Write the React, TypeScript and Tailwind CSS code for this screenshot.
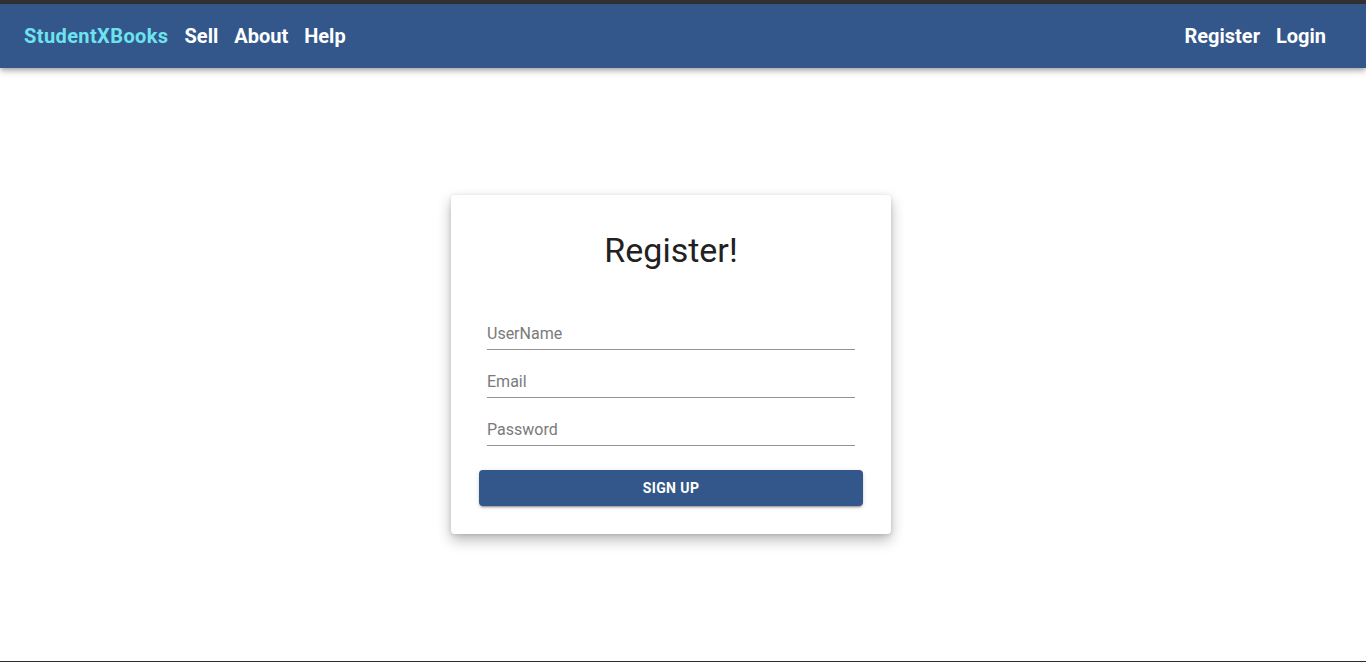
import { FC } from "react";

const fields = ["UserName", "Email", "Password"];

const App: FC = () => {
  return (
    <div
      className="min-h-screen flex flex-col bg-white"
      style={{ fontFamily: "Roboto, 'Liberation Sans', sans-serif" }}
    >
      <div className="h-[4px] bg-[#333333]" />
      <header className="h-[64px] bg-[#33578a] flex items-center justify-between pl-[24px] pr-[40px] shadow-[0_2px_4px_-1px_rgba(0,0,0,0.2),0_4px_5px_0_rgba(0,0,0,0.14),0_1px_10px_0_rgba(0,0,0,0.12)] relative z-10">
        <nav className="flex items-center gap-[16px] text-[20px] font-bold text-white">
          <span className="text-[#6ee3f0] tracking-[0.4px]">StudentXBooks</span>
          <span>Sell</span>
          <span>About</span>
          <span>Help</span>
        </nav>
        <nav className="flex items-center gap-[16px] text-[20px] font-bold text-white">
          <span>Register</span>
          <span>Login</span>
        </nav>
      </header>

      <main className="flex-1 flex justify-center pr-[24px] pt-[127px]">
        <div className="w-[440px] h-fit bg-white rounded-[4px] pt-[34px] pb-[28px] shadow-[0_6px_14px_rgba(0,0,0,0.28),0_1px_4px_rgba(0,0,0,0.12)]">
          <h1 className="text-[34px] leading-[42px] text-[#212121] text-center font-normal mb-[31px]">
            Register!
          </h1>
          <div className="px-[36px] flex flex-col">
            {fields.map((f) => (
              <div key={f} className="border-b border-[#949494] pt-[20px] pb-[3px]">
                <p className="text-[16px] leading-[24px] text-[#7a7a7a]">{f}</p>
              </div>
            ))}
          </div>
          <div className="px-[28px] mt-[24px]">
            <button className="w-full h-[36px] rounded-[4px] bg-[#33578a] text-white text-[14px] font-bold tracking-[0.4px] uppercase shadow-[0_3px_1px_-2px_rgba(0,0,0,0.2),0_2px_2px_0_rgba(0,0,0,0.14),0_1px_5px_0_rgba(0,0,0,0.12)]">
              Sign Up
            </button>
          </div>
        </div>
      </main>
      <div className="h-px bg-[#2b2b2b]" />
    </div>
  );
};

export default App;
